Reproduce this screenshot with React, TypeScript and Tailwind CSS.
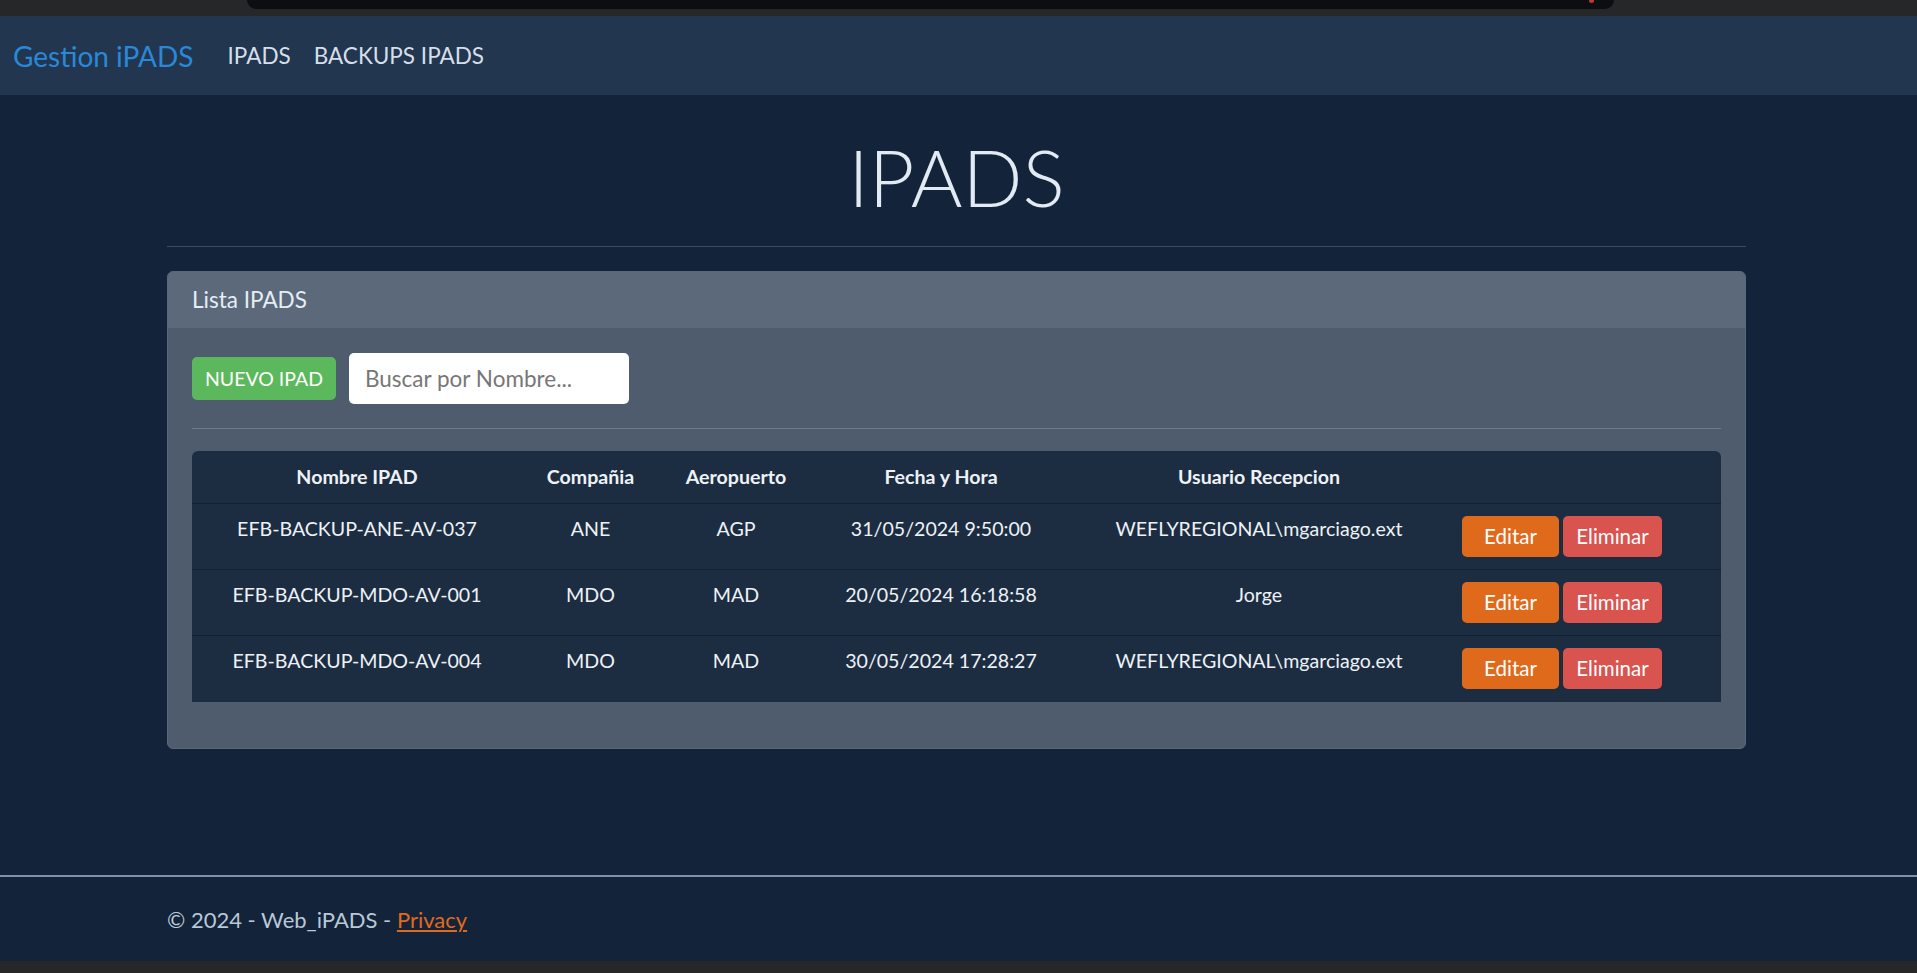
import React from 'react';

const rows = [
  { name: 'EFB-BACKUP-ANE-AV-037', company: 'ANE', airport: 'AGP', date: '31/05/2024 9:50:00', user: 'WEFLYREGIONAL\\mgarciago.ext' },
  { name: 'EFB-BACKUP-MDO-AV-001', company: 'MDO', airport: 'MAD', date: '20/05/2024 16:18:58', user: 'Jorge' },
  { name: 'EFB-BACKUP-MDO-AV-004', company: 'MDO', airport: 'MAD', date: '30/05/2024 17:28:27', user: 'WEFLYREGIONAL\\mgarciago.ext' },
];

export default function App() {
  return (
    <div
      className="h-screen flex flex-col bg-[#13233a] text-[#e4ecf4] overflow-hidden"
      style={{ fontFamily: 'Lato, "Open Sans", sans-serif' }}
    >
      {/* Browser strip */}
      <div className="h-[16px] shrink-0 bg-[#262728] flex">
        <div className="ml-[247px] w-[1367px] h-[9px] bg-[#0d0e12] rounded-b-[10px] flex justify-end pr-[20px]">
          <div className="w-[5px] h-[3px] bg-[#c0392b] rounded-b-full" />
        </div>
      </div>

      {/* Navbar */}
      <nav className="h-[79px] shrink-0 bg-[#22364f] flex items-center px-[13px]">
        <a className="text-[28px] text-[#2a88d8] mr-[34px]">Gestion iPADS</a>
        <div className="flex items-center gap-[23px] text-[22.5px] text-[#d6dfe9]">
          <a>IPADS</a>
          <a>BACKUPS IPADS</a>
        </div>
      </nav>

      {/* Main */}
      <main className="flex-1">
        <div className="w-[1579px] ml-[167px]">
          <h1 className="mt-[35px] text-center text-[79px] leading-[1.2] font-light text-[#e2eaf3]">IPADS</h1>
          <hr className="mt-[21px] border-0 border-t border-[#3a4c61]" />

          <div className="mt-[24px] rounded-[6px] overflow-hidden border border-[#5a687a] bg-[#4e5c6e]">
            <div className="h-[56px] bg-[#5b697b] flex items-center px-[24px] text-[22.5px] text-[#e6edf4]">
              Lista IPADS
            </div>
            <div className="px-[24px] pt-[25px] pb-[46px]">
              <div className="flex items-center gap-[13px]">
                <button className="w-[144px] h-[43px] rounded-[5px] bg-[#5cb85c] text-white text-[19.5px]">NUEVO IPAD</button>
                <input
                  className="w-[280px] h-[51px] rounded-[5px] bg-white px-[16px] text-[22.5px] text-[#333] placeholder:text-[#777] outline-none"
                  placeholder="Buscar por Nombre..."
                />
              </div>
              <hr className="mt-[24px] border-0 border-t border-[#6d7b8c]" />

              <div className="mt-[22px] rounded-t-[6px] overflow-hidden bg-[#1d2d41]">
                <table className="w-full table-fixed text-[19.6px] text-[#edf2f7]">
                  <colgroup>
                    <col className="w-[330px]" />
                    <col className="w-[137px]" />
                    <col className="w-[154px]" />
                    <col className="w-[256px]" />
                    <col className="w-[380px]" />
                    <col />
                  </colgroup>
                  <thead>
                    <tr className="h-[53px] border-b border-[#15212f]">
                      <th className="font-bold">Nombre IPAD</th>
                      <th className="font-bold">Compañia</th>
                      <th className="font-bold">Aeropuerto</th>
                      <th className="font-bold">Fecha y Hora</th>
                      <th className="font-bold">Usuario Recepcion</th>
                      <th />
                    </tr>
                  </thead>
                  <tbody>
                    {rows.map((r, i) => (
                      <tr key={i} className="h-[66px] border-b border-[#15212f] last:border-b-0">
                        <td className="align-top text-center pt-[12px] leading-[26px]">{r.name}</td>
                        <td className="align-top text-center pt-[12px] leading-[26px]">{r.company}</td>
                        <td className="align-top text-center pt-[12px] leading-[26px]">{r.airport}</td>
                        <td className="align-top text-center pt-[12px] leading-[26px]">{r.date}</td>
                        <td className="align-top text-center pt-[12px] leading-[26px]">{r.user}</td>
                        <td className="align-top pt-[12px] pl-[13px]">
                          <div className="flex gap-[4px] text-[20.5px]">
                            <button className="w-[97px] h-[41px] rounded-[5px] bg-[#e06a1c] text-white">Editar</button>
                            <button className="w-[99px] h-[41px] rounded-[5px] bg-[#d9534f] text-white">Eliminar</button>
                          </div>
                        </td>
                      </tr>
                    ))}
                  </tbody>
                </table>
              </div>
            </div>
          </div>
        </div>
      </main>

      {/* Footer */}
      <footer className="h-[86px] shrink-0 border-t-2 border-[#7f92a7] flex items-center">
        <div className="ml-[167px] text-[22px] text-[#b9c8d8]">
          © 2024 - Web_iPADS - <a className="text-[#e06a1c] underline">Privacy</a>
        </div>
      </footer>
      <div className="h-[12px] shrink-0 bg-[#262728]" />
    </div>
  );
}
